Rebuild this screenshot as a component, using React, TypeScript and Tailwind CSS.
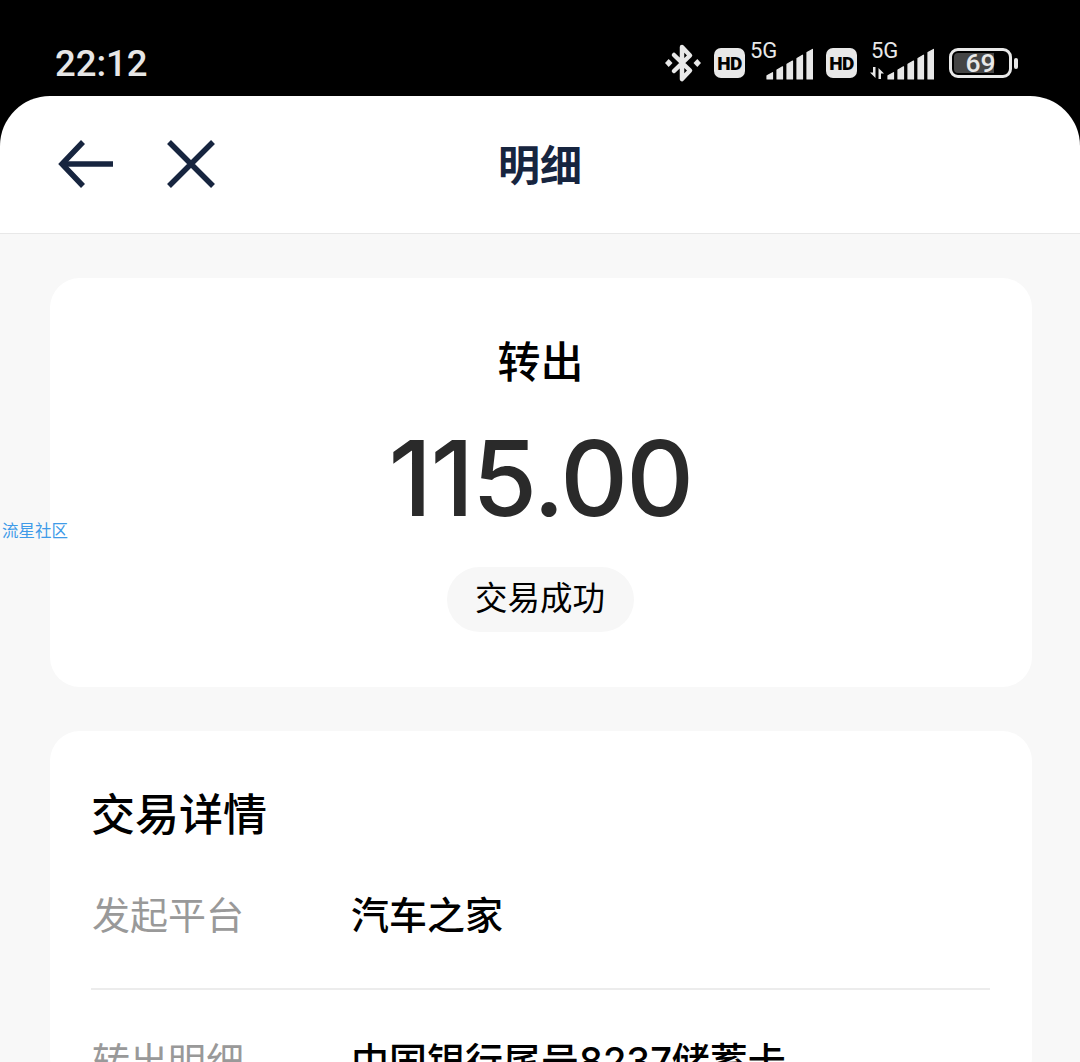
const BASE = "font-['Inter','Noto_Sans_CJK_SC',sans-serif]";

function Bluetooth() {
  return (
    <svg width="36" height="40" viewBox="0 0 36 40" fill="none">
      <path d="M9 12 L25 27.5 L17 36 V4 L25 12.5 L9 28" stroke="#e8e8e8" strokeWidth="4.5" strokeLinejoin="round" strokeLinecap="round" />
      <path d="M7.5 20 L3.7 16 L0 20 L3.7 24 Z" fill="#e8e8e8" />
      <path d="M36 20 L32.3 16 L28.5 20 L32.3 24 Z" fill="#e8e8e8" />
    </svg>
  );
}

function HdBadge() {
  return (
    <div className="flex h-[30px] w-[31px] items-center justify-center rounded-[7px] bg-[#e8e8e8] font-['Roboto',sans-serif] text-[19px] leading-none font-black tracking-[-0.5px] text-black">
      HD
    </div>
  );
}

// bars rise along a slanted envelope, tops follow the slope
function SignalBars() {
  const top = (x: number) => 29 - x * 0.58;
  return (
    <div className="relative h-[46px] w-[48px]">
      <span className="absolute top-[7px] left-[-15px] font-['Roboto',sans-serif] text-[22px] leading-[22px] text-[#e8e8e8]">
        5G
      </span>
      <svg className="absolute bottom-[-1px] left-0" width="48" height="32" viewBox="0 0 48 32">
        {[0, 1, 2, 3, 4].map((i) => {
          const x = 2 + i * 10;
          return (
            <polygon
              key={i}
              points={`${x},31 ${x},${top(x)} ${x + 5.5},${top(x + 5.5)} ${x + 5.5},31`}
              fill="#e8e8e8"
              stroke="#e8e8e8"
              strokeWidth="1.2"
              strokeLinejoin="round"
            />
          );
        })}
      </svg>
    </div>
  );
}

function Arrows() {
  return (
    <svg width="16" height="12" viewBox="0 0 16 12" className="mb-[1px]">
      <path d="M6.5 0 V11 L1 5.5 H4 V0 Z" fill="#e8e8e8" />
      <path d="M9.5 12 V1 L15 6.5 H12 V12 Z" fill="#e8e8e8" />
    </svg>
  );
}

function Battery() {
  return (
    <div className="flex items-center gap-[2px]">
      <div className="relative flex h-[30px] w-[63px] items-center justify-center rounded-[9px] border-[3px] border-[#e8e8e8]">
        <div className="absolute top-[2px] bottom-[2px] left-[2px] w-[40px] rounded-l-[4px] bg-[#444444]" />
        <span className="relative font-['Roboto',sans-serif] text-[26.5px] leading-none font-medium text-[#e8e8e8]">69</span>
      </div>
      <div className="h-[11px] w-[4px] rounded-[2px] bg-[#e8e8e8]" />
    </div>
  );
}

function StatusBar() {
  return (
    <div className="flex h-[96px] items-start justify-between bg-black pr-[62px] pl-[55px]">
      <span className="mt-[41px] font-['Roboto',sans-serif] text-[36.5px] leading-[46px] font-medium text-[#e6e6e6]">22:12</span>
      <div className="mt-[33px] flex h-[46px] items-end">
        <div className="mb-[-4px]"><Bluetooth /></div>
        <div className="mb-[1px] ml-[13px]"><HdBadge /></div>
        <div className="ml-[20px]"><SignalBars /></div>
        <div className="mb-[1px] ml-[13px]"><HdBadge /></div>
        <div className="ml-[12px] mb-[-1px]"><Arrows /></div>
        <div className="ml-[1px]"><SignalBars /></div>
        <div className="mb-[1px] ml-[15px]"><Battery /></div>
      </div>
    </div>
  );
}

function NavBar() {
  return (
    <div className="relative flex h-[138px] items-center rounded-t-[50px] border-b border-[#e8e8e8] bg-white pb-[2px] pl-[58px]">
      <svg width="58" height="52" viewBox="0 0 58 52" fill="none" stroke="#17253f" strokeWidth="5.5">
        <path d="M25 4 L4 26 L25 48" />
        <path d="M4 26 H55" />
      </svg>
      <svg className="ml-[49px]" width="52" height="52" viewBox="0 0 52 52" fill="none" stroke="#17253f" strokeWidth="5.5">
        <path d="M4 4 L48 48 M48 4 L4 48" />
      </svg>
      <div className="absolute inset-x-0 top-[40px] text-center text-[42px] leading-[60px] font-semibold text-[#17253f]">明细</div>
    </div>
  );
}

function Row({ label, value }: { label: string; value: string }) {
  return (
    <div className="flex text-[38px] leading-[52px]">
      <div className="w-[259px] text-[#999999]">{label}</div>
      <div className="font-medium text-black">{value}</div>
    </div>
  );
}

export default function App() {
  return (
    <div className={"relative h-[1062px] w-[1080px] overflow-hidden bg-black " + BASE}>
      <StatusBar />
      <NavBar />
      <div className="h-[1000px] bg-[#f8f8f8] pt-[44px] pr-[48px] pl-[50px]">
        <div className="flex h-[409px] flex-col items-center rounded-[30px] bg-white pt-[54px]">
          <div className="mr-[1px] text-[43px] leading-[60px] font-medium text-black">转出</div>
          <div className="mt-[26px] mr-[1px] text-[105px] leading-[120px] font-medium tracking-[-1.7px] text-[#2a2a2a]">115.00</div>
          <div className="mt-[29px] mr-[2px] flex h-[65px] w-[187px] items-center justify-center rounded-full bg-[#f7f7f7] text-[32.5px] text-black">
            交易成功
          </div>
        </div>
        <div className="mt-[44px] rounded-[30px] bg-white px-[42px] pt-[54px]">
          <div className="ml-[-1px] text-[44px] leading-[60px] font-medium text-black">交易详情</div>
          <div className="mt-[44px]"><Row label="发起平台" value="汽车之家" /></div>
          <div className="mt-[47px] ml-[-1px] h-[2px] bg-[#ececec]" />
          <div className="mt-[45px]"><Row label="转出明细" value="中国银行尾号8237储蓄卡" /></div>
        </div>
      </div>
      <span className="absolute top-[520px] left-[2px] text-[16.5px] leading-[22px] text-[#3f9be8]">流星社区</span>
    </div>
  );
}
